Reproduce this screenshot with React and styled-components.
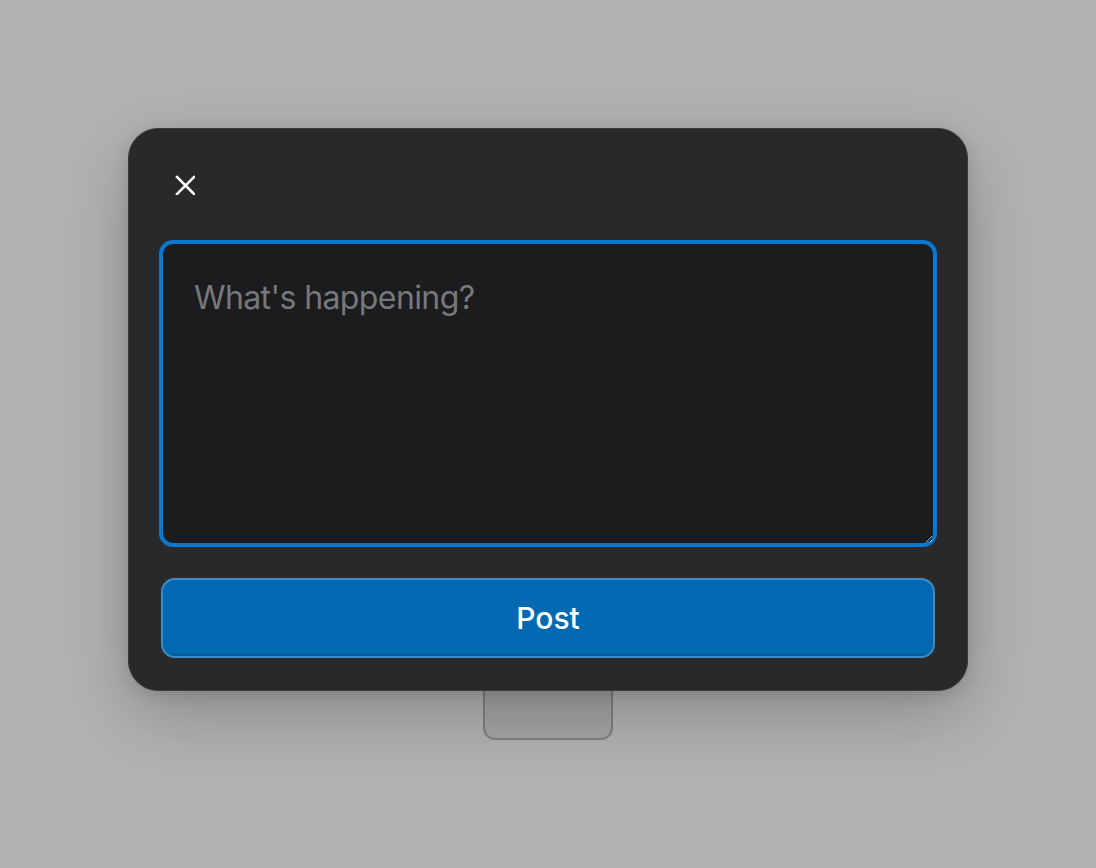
import React from "react";
import styled, { createGlobalStyle } from "styled-components";

const Global = createGlobalStyle`
  html, body { margin: 0; padding: 0; }
  body {
    background: #ffffff;
    font-family: Inter, "Noto Sans", "Liberation Sans", sans-serif;
    -webkit-font-smoothing: antialiased;
  }
`;

const Page = styled.div`
  position: relative;
  width: 1096px;
  height: 868px;
  display: flex;
  justify-content: center;
  align-items: flex-start;
  padding-top: 600px;
  box-sizing: border-box;
  overflow: hidden;
`;

const Trigger = styled.button`
  width: 130px;
  height: 140px;
  box-sizing: border-box;
  background: #ececec;
  border: 2px solid #b8b8b8;
  border-radius: 12px;
  font-family: inherit;
  font-size: 16px;
`;

const Overlay = styled.div`
  position: absolute;
  inset: 0;
  background: rgba(0, 0, 0, 0.3);
  display: flex;
  justify-content: center;
  align-items: flex-start;
  padding-top: 128px;
  box-sizing: border-box;
`;

const Dialog = styled.div`
  width: 840px;
  box-sizing: border-box;
  background: #28292b;
  border: 1px solid #3b3c3f;
  border-radius: 30px;
  padding: 32px;
  display: flex;
  flex-direction: column;
  gap: 33px;
  box-shadow: 0 24px 70px rgba(0, 0, 0, 0.22), 0 4px 16px rgba(0, 0, 0, 0.12);
`;

const CloseButton = styled.button`
  width: 48px;
  height: 48px;
  padding: 0;
  border: none;
  background: transparent;
  color: #ffffff;
  display: flex;
  align-items: center;
  justify-content: center;
  cursor: pointer;
`;

const TextArea = styled.textarea`
  display: block;
  width: 100%;
  height: 303px;
  box-sizing: border-box;
  margin: 0;
  padding: 35px 30px 30px 31px;
  background: #1b1c1e;
  border: 2px solid #0a78d0;
  box-shadow: 0 0 0 2px #0a78d0;
  border-radius: 12px;
  color: #ffffff;
  caret-color: #ffffff;
  font-family: Inter, "Noto Sans", "Liberation Sans", sans-serif;
  font-size: 32px;
  letter-spacing: -0.6px;
  line-height: 1.2;
  outline: none;
  &::placeholder {
    color: #77787b;
  }
`;

const PostButton = styled.button`
  width: 100%;
  height: 80px;
  box-sizing: border-box;
  background: #0069b2;
  border: 2px solid #3f8bc6;
  border-radius: 14px;
  box-shadow: inset 0 -2px 0 #0a5a94;
  color: #ffffff;
  font-family: Inter, "Noto Sans", "Liberation Sans", sans-serif;
  font-size: 30px;
  font-weight: 500;
  cursor: pointer;
`;

function XIcon() {
  return (
    <svg width="20" height="20" viewBox="0 0 20 20" fill="none">
      <path d="M2 2L19 19M19 2L2 19" stroke="#ffffff" strokeWidth="2.5" strokeLinecap="square" />
    </svg>
  );
}

export default function App() {
  return (
    <>
      <Global />
      <Page>
        <Trigger>Open</Trigger>
        <Overlay>
          <Dialog>
            <CloseButton aria-label="Close">
              <XIcon />
            </CloseButton>
            <TextArea autoFocus placeholder="What's happening?" />
            <PostButton>Post</PostButton>
          </Dialog>
        </Overlay>
      </Page>
    </>
  );
}
